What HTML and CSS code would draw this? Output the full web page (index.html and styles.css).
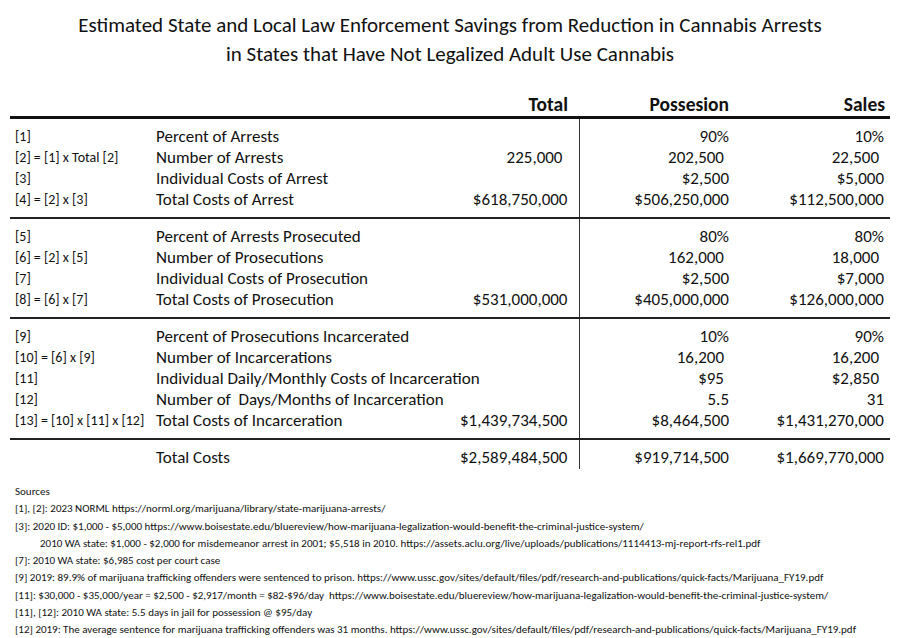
FILE: index.html
```html
<!DOCTYPE html>
<html>
<head>
<meta charset="utf-8">
<link rel="stylesheet" href="styles.css">
</head>
<body>
<div class="page">
  <h1 class="title">Estimated State and Local Law Enforcement Savings from Reduction in Cannabis Arrests<br>in States that Have Not Legalized Adult Use Cannabis</h1>
  <table class="data">
    <colgroup>
      <col class="c-ref"><col class="c-desc"><col class="c-total"><col class="c-pos"><col class="c-sales">
    </colgroup>
    <thead>
      <tr><th></th><th></th><th class="num">Total</th><th class="num">Possesion</th><th class="num">Sales</th></tr>
    </thead>
    <tbody>
      <tr><td class="ref">[1]</td><td>Percent of Arrests</td><td class="num tot"></td><td class="num">90%</td><td class="num">10%</td></tr>
      <tr><td class="ref">[2] = [1] x Total [2]</td><td>Number of Arrests</td><td class="num tot sp">225,000</td><td class="num sp">202,500</td><td class="num sp">22,500</td></tr>
      <tr><td class="ref">[3]</td><td>Individual Costs of Arrest</td><td class="num tot"></td><td class="num">$2,500</td><td class="num">$5,000</td></tr>
      <tr><td class="ref">[4] = [2] x [3]</td><td>Total Costs of Arrest</td><td class="num tot">$618,750,000</td><td class="num">$506,250,000</td><td class="num">$112,500,000</td></tr>
    </tbody>
    <tbody>
      <tr><td class="ref">[5]</td><td>Percent of Arrests Prosecuted</td><td class="num tot"></td><td class="num">80%</td><td class="num">80%</td></tr>
      <tr><td class="ref">[6] = [2] x [5]</td><td>Number of Prosecutions</td><td class="num tot"></td><td class="num sp">162,000</td><td class="num sp">18,000</td></tr>
      <tr><td class="ref">[7]</td><td>Individual Costs of Prosecution</td><td class="num tot"></td><td class="num">$2,500</td><td class="num">$7,000</td></tr>
      <tr><td class="ref">[8] = [6] x [7]</td><td>Total Costs of Prosecution</td><td class="num tot">$531,000,000</td><td class="num">$405,000,000</td><td class="num">$126,000,000</td></tr>
    </tbody>
    <tbody>
      <tr><td class="ref">[9]</td><td>Percent of Prosecutions Incarcerated</td><td class="num tot"></td><td class="num">10%</td><td class="num">90%</td></tr>
      <tr><td class="ref">[10] = [6] x [9]</td><td>Number of Incarcerations</td><td class="num tot"></td><td class="num sp">16,200</td><td class="num sp">16,200</td></tr>
      <tr><td class="ref">[11]</td><td>Individual Daily/Monthly Costs of Incarceration</td><td class="num tot"></td><td class="num sp">$95</td><td class="num sp">$2,850</td></tr>
      <tr><td class="ref">[12]</td><td>Number of&nbsp; Days/Months of Incarceration</td><td class="num tot"></td><td class="num">5.5</td><td class="num">31</td></tr>
      <tr><td class="ref">[13] = [10] x [11] x [12]</td><td>Total Costs of Incarceration</td><td class="num tot">$1,439,734,500</td><td class="num">$8,464,500</td><td class="num">$1,431,270,000</td></tr>
    </tbody>
    <tbody class="totals">
      <tr><td class="ref"></td><td>Total Costs</td><td class="num tot">$2,589,484,500</td><td class="num">$919,714,500</td><td class="num">$1,669,770,000</td></tr>
    </tbody>
  </table>
  <div class="sources">
    <p>Sources</p>
    <p>[1], [2]: 2023 NORML https://norml.org/marijuana/library/state-marijuana-arrests/</p>
    <p>[3]: 2020 ID: $1,000 - $5,000 https://www.boisestate.edu/bluereview/how-marijuana-legalization-would-benefit-the-criminal-justice-system/</p>
    <p class="indent">2010 WA state: $1,000 - $2,000 for misdemeanor arrest in 2001; $5,518 in 2010. https://assets.aclu.org/live/uploads/publications/1114413-mj-report-rfs-rel1.pdf</p>
    <p>[7]: 2010 WA state: $6,985 cost per court case</p>
    <p>[9] 2019: 89.9% of marijuana trafficking offenders were sentenced to prison. https://www.ussc.gov/sites/default/files/pdf/research-and-publications/quick-facts/Marijuana_FY19.pdf</p>
    <p>[11]: $30,000 - $35,000/year = $2,500 - $2,917/month = $82-$96/day&nbsp; https://www.boisestate.edu/bluereview/how-marijuana-legalization-would-benefit-the-criminal-justice-system/</p>
    <p>[11], [12]: 2010 WA state: 5.5 days in jail for possession @ $95/day</p>
    <p>[12] 2019: The average sentence for marijuana trafficking offenders was 31 months. https://www.ussc.gov/sites/default/files/pdf/research-and-publications/quick-facts/Marijuana_FY19.pdf</p>
  </div>
</div>
</body>
</html>
```

FILE: styles.css
```css
html, body {
  margin: 0;
  padding: 0;
  background: #fff;
}
body {
  font-family: Carlito, Lato, "Liberation Sans", sans-serif;
  color: #111;
}
.page {
  width: 900px;
  height: 638px;
  padding: 11px 10px 0 10px;
  box-sizing: border-box;
  overflow: hidden;
}
.title {
  margin: 0;
  font-weight: normal;
  font-size: 21px;
  line-height: 29px;
  text-align: center;
}
.data {
  width: 880px;
  table-layout: fixed;
  border-collapse: collapse;
  margin-top: 25px;
  font-size: 17px;
}
.c-ref { width: 146px; }
.c-desc { width: 290px; }
.c-total { width: 133px; }
.c-pos { width: 156px; }
.c-sales { width: 155px; }
.data th {
  font-weight: bold;
  font-size: 19.5px;
  line-height: 20px;
  height: 20px;
  padding: 0 0 2px 0;
  border-bottom: 3px solid #111;
}
.data th.num:nth-child(3) { padding-right: 11px; }
.data th.num:nth-child(4) { padding-right: 6px; }
.data th.num:nth-child(5) { padding-right: 5px; }
.data td {
  height: 21px;
  padding: 0;
  white-space: nowrap;
  line-height: 21px;
  overflow: visible;
}
.data td.ref {
  font-size: 14px;
  padding-left: 5px;
}
.data .num { text-align: right; }
.data td.num { padding-right: 6px; }
.data td.num.sp { padding-right: 11px; }
.data td.tot {
  border-right: 1px solid #333;
  padding-right: 11px;
}
.data td.tot.sp { padding-right: 16px; }
.data tbody tr:first-child td { padding-top: 7px; }
.data tbody tr:last-child td { padding-bottom: 7px; }
.data tbody { border-bottom: 2px solid #222; }
.data tbody.totals { border-bottom: none; }
.data tbody.totals tr td { padding-top: 7px; padding-bottom: 1px; }
.sources {
  margin-top: 14px;
  padding-left: 5px;
  font-size: 11px;
  line-height: 17.25px;
}
.sources p {
  margin: 0;
  white-space: nowrap;
}
.sources p.indent { padding-left: 25px; }
```
